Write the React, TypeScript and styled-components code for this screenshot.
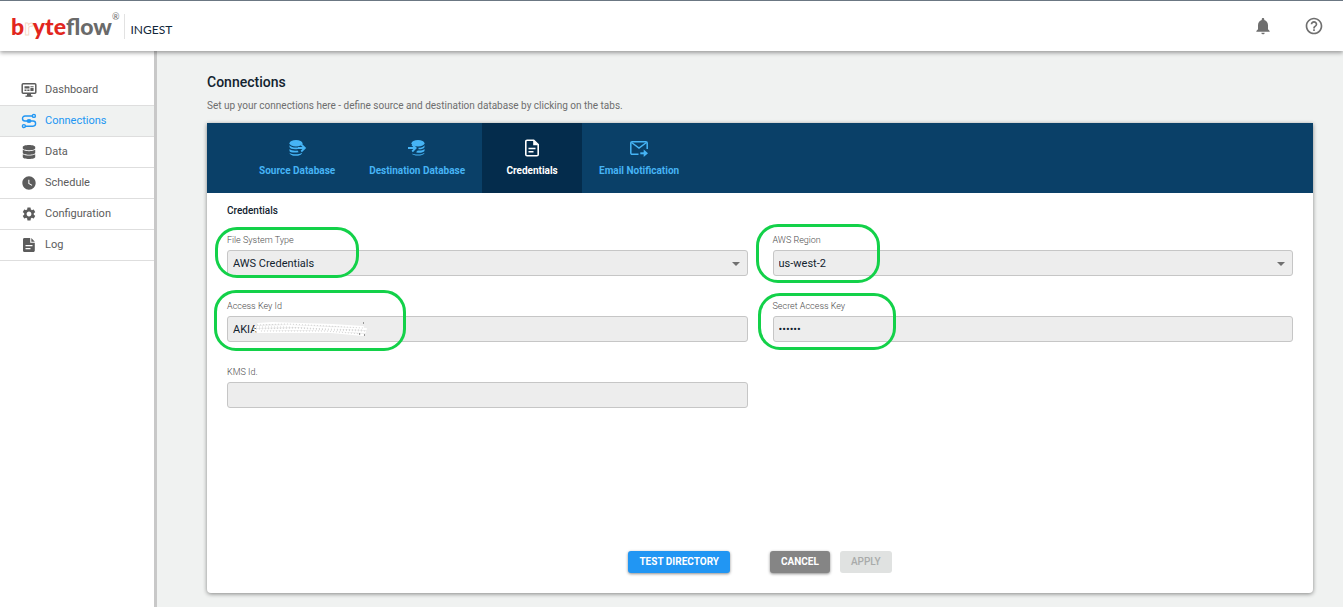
import React from 'react';
import styled, { createGlobalStyle } from 'styled-components';
import { FaDatabase } from 'react-icons/fa';
import { MdWatchLater, MdSettings, MdNotifications, MdHelpOutline } from 'react-icons/md';

const GlobalStyle = createGlobalStyle`
  *, *::before, *::after { box-sizing: border-box; }
  body {
    margin: 0;
    background: #f0f2f1;
    color: #12232f;
    font-family: Roboto, 'Liberation Sans', sans-serif;
  }
  button, input, select { font-family: inherit; }
`;

const Page = styled.div`
  min-height: 100vh;
  display: flex;
  flex-direction: column;
`;

const Header = styled.header`
  position: relative;
  z-index: 2;
  height: 51px;
  padding: 0 19px 0 11px;
  display: flex;
  align-items: center;
  justify-content: space-between;
  background: #fff;
  border-top: 1px solid #6b7783;
  box-shadow: 0 2px 4px rgba(0, 0, 0, 0.35);
`;

const Brand = styled.a`
  display: flex;
  align-items: center;
  text-decoration: none;
`;

const Logo = styled.span`
  display: flex;
  padding-right: 5px;
  border-right: 1px solid #e2e2e2;
  font: 900 23px/25px Lato, sans-serif;
  color: #6a6a6a;
`;

const LogoRed = styled.span`
  color: #e2261d;
`;

const LogoGhost = styled.span`
  color: #fff;
  -webkit-text-stroke: 1px #f6d9c8;
`;

const Registered = styled.sup`
  font: 400 9px/9px Lato, sans-serif;
  margin-top: -2px;
`;

const Product = styled.span`
  padding: 8px 0 0 5px;
  font: 400 12px/16px Lato, sans-serif;
  color: #10263a;
`;

const HeaderActions = styled.div`
  display: flex;
  gap: 31px;
`;

const IconButton = styled.button`
  display: flex;
  padding: 0;
  border: 0;
  background: none;
  color: #6f6f6f;
  font-size: 20px;
`;

const Body = styled.div`
  flex: 1;
  display: flex;
`;

const Sidebar = styled.nav`
  flex: none;
  width: 157px;
  padding-top: 24px;
  background: #fff;
  border-right: 3px solid #c8c8c8;
`;

const NavItem = styled.a<{ $active?: boolean }>`
  display: flex;
  align-items: center;
  gap: 8px;
  height: 31px;
  padding-left: 21px;
  border-bottom: 1px solid #dedede;
  background: ${(p) => (p.$active ? '#f0f2f1' : '#fff')};
  color: ${(p) => (p.$active ? '#2196f3' : '#5c5c5c')};
  font-size: 11px;
  line-height: 14px;
  text-decoration: none;

  svg { width: 16px; height: 16px; }
`;

const Main = styled.main`
  flex: 1;
  min-width: 0;
  display: flex;
  flex-direction: column;
  padding: 21px 30px 14px 50px;
`;

const Title = styled.h1`
  margin: 0;
  font-size: 14px;
  font-weight: 500;
  line-height: 20px;
`;

const Intro = styled.p`
  margin: 7px 0 10px;
  font-size: 10px;
  line-height: 14px;
  color: #6e6e6e;
`;

const Card = styled.section`
  flex: 1;
  display: flex;
  flex-direction: column;
  background: #fff;
  border-radius: 0 0 4px 4px;
  box-shadow: 0 1px 4px rgba(0, 0, 0, 0.45);
`;

const Tabs = styled.div`
  display: flex;
  height: 70px;
  padding-left: 35px;
  background: #0a4068;
`;

const Tab = styled.button<{ $active?: boolean }>`
  display: flex;
  flex-direction: column;
  align-items: center;
  gap: 6px;
  min-width: 100px;
  padding: 15px 17px 0;
  border: 0;
  background: ${(p) => (p.$active ? '#042c4c' : 'transparent')};
  color: ${(p) => (p.$active ? '#fff' : '#46b4f5')};
  font-size: 10px;
  font-weight: 700;
  line-height: 14px;

  svg { width: 20px; height: 20px; }
`;

const Form = styled.form`
  flex: 1;
  display: flex;
  flex-direction: column;
  padding: 11px 20px 20px;
`;

const SectionTitle = styled.h2`
  margin: 0 0 17px;
  font-size: 10px;
  font-weight: 500;
  line-height: 14px;
`;

const Fields = styled.div`
  display: grid;
  grid-template-columns: 1fr 1fr;
  gap: 25px;
`;

const Field = styled.div`
  position: relative;
  display: flex;
  flex-direction: column;
  gap: 4px;
`;

const Label = styled.label`
  font-size: 9px;
  font-weight: 300;
  line-height: 11px;
  color: #4c4c4c;
`;

const ControlWrap = styled.div`
  position: relative;
  display: flex;

  > svg {
    position: absolute;
    right: 8px;
    top: 12px;
    pointer-events: none;
  }
`;

const controlStyle = `
  width: 100%;
  height: 26px;
  padding: 0 5px;
  border: 1px solid #c6c6c6;
  border-radius: 3px;
  background: #ededed;
  color: #12232f;
  font-size: 11px;
`;

const Select = styled.select`
  ${controlStyle}
  appearance: none;
`;

const Input = styled.input`
  ${controlStyle}
`;

const Highlight = styled.span<{ $left: number; $top: number; $width: number; $height: number }>`
  position: absolute;
  z-index: 1;
  left: ${(p) => p.$left}px;
  top: ${(p) => p.$top}px;
  width: ${(p) => p.$width}px;
  height: ${(p) => p.$height}px;
  border: 3px solid #13d149;
  border-radius: 22px;
  pointer-events: none;
`;

const Redaction = styled.svg`
  && {
    left: 27px;
    right: auto;
    top: 5px;
  }
`;

const Actions = styled.div`
  display: flex;
  justify-content: center;
  gap: 10px;
  margin-top: auto;
`;

const Button = styled.button<{ $kind: 'primary' | 'neutral' | 'disabled' }>`
  height: 22px;
  padding: 0 11px;
  border: 0;
  border-radius: 3px;
  font-size: 10px;
  font-weight: ${(p) => (p.$kind === 'disabled' ? 500 : 700)};
  line-height: 22px;
  color: ${(p) => (p.$kind === 'disabled' ? '#a9abaa' : '#fff')};
  background: ${(p) => ({ primary: '#2196f3', neutral: '#858585', disabled: '#e0e2e1' })[p.$kind]};
  box-shadow: ${(p) => (p.$kind === 'disabled' ? 'none' : '0 1px 3px rgba(0, 0, 0, 0.45)')};
  margin-right: ${(p) => (p.$kind === 'primary' ? 30 : 0)}px;
`;

const DashboardIcon = () => (
  <svg viewBox="0 0 16 16" fill="none" stroke="currentColor" aria-hidden="true">
    <rect x="1.2" y="1.7" width="13.6" height="9.6" rx="1" strokeWidth="1.5" />
    <path d="M6 12h4v2H6z" fill="currentColor" stroke="none" />
    <path d="M4.5 14.2h7" strokeWidth="1.3" />
    <path d="M3.5 4.2h5v2.4h-5zM9.4 4.2h3.2v1H9.4zM9.4 6h3.2v2.9H9.4zM3.5 7.5h2v1.4h-2zM6.3 7.5h2.2v1.4H6.3z" fill="currentColor" stroke="none" />
  </svg>
);

const ConnectionsIcon = () => (
  <svg viewBox="0 0 16 16" fill="none" stroke="currentColor" strokeWidth="1.4" strokeLinecap="round" aria-hidden="true">
    <path d="M11.2 3H4a2.4 2.4 0 0 0 0 5h8a2.6 2.6 0 0 1 0 5.2H4.6" />
    <circle cx="12.9" cy="2.9" r="1.5" />
    <circle cx="2.9" cy="13.1" r="1.5" />
    <ellipse cx="8" cy="8" rx="2.5" ry="1.9" fill="currentColor" stroke="none" />
  </svg>
);

const LogIcon = () => (
  <svg viewBox="0 0 16 16" aria-hidden="true">
    <path
      fill="currentColor"
      fillRule="evenodd"
      d="M3.4 1h5.8v4.8h4.6v7.7c0 .9-.6 1.5-1.5 1.5H3.4c-.9 0-1.4-.6-1.4-1.5v-11C2 1.600 2.500 1 3.400 1zM4.500 8v1.300h7V8zM4.500 10.900v1.300h5v-1.300z"
    />
    <path fill="currentColor" d="M10.300 1.100l3.500 3.600h-3.500z" />
  </svg>
);

const DatabaseTabIcon = ({ incoming }: { incoming?: boolean }) => (
  <svg viewBox="0 0 20 20" fill="currentColor" aria-hidden="true">
    <g transform={incoming ? 'translate(2 0)' : undefined}>
      <ellipse cx="9" cy="5.200" rx="6.500" ry="3.200" />
      {incoming ? (
        <>
          <path d="M15.500 7.200v2c-1 1.600-3.600 2.200-6 2V9.800c2.500.1 4.700-.7 6-2.600z" />
          <path d="M15.500 11v2c-1.400 1.800-5.200 2.400-8.500 1.300l1.700-1.900c2.600.3 5.400-.1 6.800-1.400zM15.500 14.700c-.4 3.300-10.800 4-12.700.8 3 1.600 10 1.600 12.700-.8z" />
        </>
      ) : (
        <>
          <path d="M2.500 7.200c1.400 1.900 4.500 2.700 8.500 2.300v1.600c-4.500.6-8-.3-8.500-2.100z" />
          <path d="M2.500 11c1.500 1.500 4.500 2 8 1.500l1.200 1.700C7.500 15 3 14.600 2.500 12.900zM2.500 14.700c2.500 2 9 2.300 12.700 0-.7 4.100-12.200 4.200-12.700 0z" />
        </>
      )}
    </g>
    <path
      d={incoming ? 'M1 10h7M5.200 6.500L8.700 10l-3.500 3.500' : 'M11 10h7M14.200 6.500l3.700 3.500-3.700 3.500'}
      fill="none"
      stroke="currentColor"
      strokeWidth="1.800"
    />
  </svg>
);

const CredentialsIcon = () => (
  <svg viewBox="0 0 20 20" fill="none" stroke="currentColor" strokeWidth="1.600" aria-hidden="true">
    <path d="M11.700 2.300H5.100c-.9 0-1.300.5-1.300 1.300v12.800c0 .8.500 1.300 1.300 1.300h9.800c.8 0 1.300-.5 1.300-1.300V6.700z" />
    <path d="M11.200 2v5.200h5z" fill="currentColor" stroke="none" />
    <path d="M6.500 10.500h7M6.500 13.700h5" />
  </svg>
);

const EmailIcon = () => (
  <svg viewBox="0 0 20 20" fill="none" stroke="currentColor" strokeWidth="1.500" aria-hidden="true">
    <path d="M9.500 16.300H3.200c-.9 0-1.400-.5-1.400-1.300V5c0-.9.500-1.300 1.300-1.300h13.800c.8 0 1.300.5 1.300 1.300v6" />
    <path d="M2.500 4.500L10 10l7.500-5.500" />
    <path d="M11.300 15.300h5" strokeWidth="2" />
    <path d="M14.700 11.500l4.300 3.800-4.300 3.800z" fill="currentColor" stroke="none" />
  </svg>
);

const Caret = () => (
  <svg width="8" height="4" viewBox="0 0 8 4" aria-hidden="true">
    <path d="M0 0h8L4 4z" fill="#707070" />
  </svg>
);

const Scribble = () => (
  <Redaction width="114" height="16" viewBox="0 0 114 16" fill="none" aria-hidden="true">
    <path
      d="M4 3l14-1 30 1 30 1 31 2M1 6l35-1 40 2 36 1M1 9l45-1 30 1 35 2M3 11l40 0 34 0 32 3"
      stroke="#fff"
      strokeWidth="2"
      strokeLinecap="round"
    />
    <path
      d="M3 4l30-1 40 2 36 2M2 6l30 0 40 2 36 1M2 8l40-1 35 2 34 1M7 10l30 0 35 0 36 3"
      stroke="#d4d4d4"
      strokeDasharray="1 2"
    />
    <path d="M109 2h1M110 14h1M105 13h1" stroke="#444" />
  </Redaction>
);

const navigation = [
  { label: 'Dashboard', icon: <DashboardIcon /> },
  { label: 'Connections', icon: <ConnectionsIcon />, active: true },
  { label: 'Data', icon: <FaDatabase viewBox="-64 -32 576 576" /> },
  { label: 'Schedule', icon: <MdWatchLater /> },
  { label: 'Configuration', icon: <MdSettings /> },
  { label: 'Log', icon: <LogIcon /> },
];

const tabs = [
  { label: 'Source Database', icon: <DatabaseTabIcon /> },
  { label: 'Destination Database', icon: <DatabaseTabIcon incoming /> },
  { label: 'Credentials', icon: <CredentialsIcon />, active: true },
  { label: 'Email Notification', icon: <EmailIcon /> },
];

export default function App() {
  return (
    <Page>
      <GlobalStyle />
      <Header>
        <Brand href="#">
          <Logo>
            <LogoRed>b</LogoRed>
            <LogoGhost>r</LogoGhost>
            <LogoRed>yte</LogoRed>
            flow
            <Registered>®</Registered>
          </Logo>
          <Product>INGEST</Product>
        </Brand>
        <HeaderActions>
          <IconButton type="button" aria-label="Notifications"><MdNotifications /></IconButton>
          <IconButton type="button" aria-label="Help"><MdHelpOutline /></IconButton>
        </HeaderActions>
      </Header>
      <Body>
        <Sidebar>
          {navigation.map((item) => (
            <NavItem key={item.label} href="#" $active={item.active}>
              {item.icon}
              {item.label}
            </NavItem>
          ))}
        </Sidebar>
        <Main>
          <Title>Connections</Title>
          <Intro>
            Set up your connections here - define source and destination database by clicking on the tabs.
          </Intro>
          <Card>
            <Tabs role="tablist">
              {tabs.map((tab) => (
                <Tab key={tab.label} type="button" role="tab" aria-selected={!!tab.active} $active={tab.active}>
                  {tab.icon}
                  {tab.label}
                </Tab>
              ))}
            </Tabs>
            <Form>
              <SectionTitle>Credentials</SectionTitle>
              <Fields>
                <Field>
                  <Label htmlFor="file-system">File System Type</Label>
                  <ControlWrap>
                    <Select id="file-system"><option>AWS Credentials</option></Select>
                    <Caret />
                  </ControlWrap>
                  <Highlight $left={-12} $top={-8} $width={144} $height={51} />
                </Field>
                <Field>
                  <Label htmlFor="region">AWS Region</Label>
                  <ControlWrap>
                    <Select id="region"><option>us-west-2</option></Select>
                    <Caret />
                  </ControlWrap>
                  <Highlight $left={-17} $top={-11} $width={124} $height={59} />
                </Field>
                <Field>
                  <Label htmlFor="access-key">Access Key Id</Label>
                  <ControlWrap>
                    <Input id="access-key" defaultValue="AKIA" />
                    <Scribble />
                  </ControlWrap>
                  <Highlight $left={-13} $top={-11} $width={192} $height={61} />
                </Field>
                <Field>
                  <Label htmlFor="secret-key">Secret Access Key</Label>
                  <ControlWrap>
                    <Input id="secret-key" type="password" defaultValue="secret" />
                  </ControlWrap>
                  <Highlight $left={-15} $top={-8} $width={138} $height={57} />
                </Field>
                <Field>
                  <Label htmlFor="kms">KMS Id.</Label>
                  <ControlWrap><Input id="kms" /></ControlWrap>
                </Field>
              </Fields>
              <Actions>
                <Button type="button" $kind="primary">TEST DIRECTORY</Button>
                <Button type="button" $kind="neutral">CANCEL</Button>
                <Button type="button" $kind="disabled" disabled>APPLY</Button>
              </Actions>
            </Form>
          </Card>
        </Main>
      </Body>
    </Page>
  );
}
